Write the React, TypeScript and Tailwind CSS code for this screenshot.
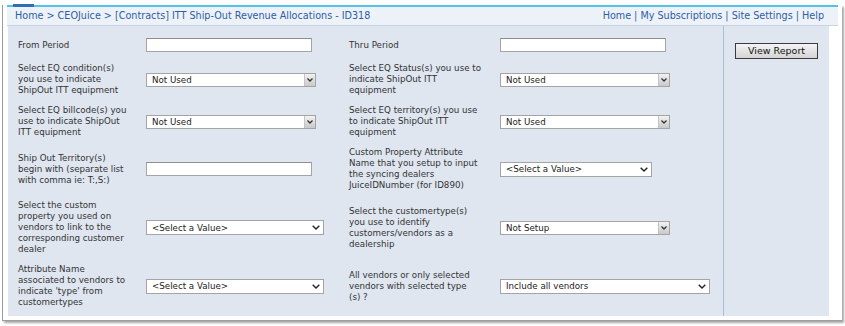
import React from "react";

type Field =
  | { kind: "input"; w: number }
  | { kind: "old"; w: number; value: string }
  | { kind: "new"; w: number; value: string };

type Row = { left: string[]; leftField: Field; right: string[]; rightField: Field };

const rows: Row[] = [
  {
    left: ["From Period"],
    leftField: { kind: "input", w: 166 },
    right: ["Thru Period"],
    rightField: { kind: "input", w: 166 },
  },
  {
    left: ["Select EQ condition(s)", "you use to indicate", "ShipOut ITT equipment"],
    leftField: { kind: "old", w: 170, value: "Not Used" },
    right: ["Select EQ Status(s) you use to", "indicate ShipOut ITT", "equipment"],
    rightField: { kind: "old", w: 170, value: "Not Used" },
  },
  {
    left: ["Select EQ billcode(s) you", "use to indicate ShipOut", "ITT equipment"],
    leftField: { kind: "old", w: 170, value: "Not Used" },
    right: ["Select EQ territory(s) you use", "to indicate ShipOut ITT", "equipment"],
    rightField: { kind: "old", w: 170, value: "Not Used" },
  },
  {
    left: ["Ship Out Territory(s)", "begin with (separate list", "with comma ie: T:,S:)"],
    leftField: { kind: "input", w: 166 },
    right: [
      "Custom Property Attribute",
      "Name that you setup to input",
      "the syncing dealers",
      "JuiceIDNumber (for ID890)",
    ],
    rightField: { kind: "new", w: 152, value: "<Select a Value>" },
  },
  {
    left: [
      "Select the custom",
      "property you used on",
      "vendors to link to the",
      "corresponding customer",
      "dealer",
    ],
    leftField: { kind: "new", w: 178, value: "<Select a Value>" },
    right: [
      "Select the customertype(s)",
      "you use to identify",
      "customers/vendors as a",
      "dealership",
    ],
    rightField: { kind: "old", w: 170, value: "Not Setup" },
  },
  {
    left: ["Attribute Name", "associated to vendors to", "indicate 'type' from", "customertypes"],
    leftField: { kind: "new", w: 178, value: "<Select a Value>" },
    right: ["All vendors or only selected", "vendors with selected type", "(s) ?"],
    rightField: { kind: "new", w: 210, value: "Include all vendors" },
  },
];

function Label({ lines }: { lines: string[] }) {
  return (
    <div className="text-[8.7px] leading-[11px] text-[#333]">
      {lines.map((l) => (
        <div key={l} className="whitespace-nowrap">
          {l}
        </div>
      ))}
    </div>
  );
}

function FieldBox({ field }: { field: Field }) {
  if (field.kind === "input") {
    return (
      <div
        className="h-[14px] border border-[#a4a4a4] border-t-[#8e8e8e] bg-white"
        style={{ width: field.w }}
      />
    );
  }
  if (field.kind === "old") {
    return (
      <div
        className="flex h-[14px] border border-[#a4a4a4] bg-white"
        style={{ width: field.w }}
      >
        <span className="flex-1 pl-[5px] text-[8.7px] leading-[12px] text-[#222]">
          {field.value}
        </span>
        <span className="flex w-[11px] items-center justify-center border-l border-[#c4c4c4] bg-gradient-to-b from-[#f2f2f2] to-[#c9c9c9]">
          <svg width="6" height="4" viewBox="0 0 6 4">
            <path d="M0.5 0.5 L3 3 L5.5 0.5" fill="none" stroke="#333" strokeWidth="1.3" />
          </svg>
        </span>
      </div>
    );
  }
  return (
    <div
      className="flex h-[15px] items-center border border-[#a4a4a4] bg-white"
      style={{ width: field.w }}
    >
      <span className="flex-1 pl-[5px] text-[8.7px] leading-[12px] text-[#222]">
        {field.value}
      </span>
      <svg className="mr-[3px]" width="8" height="5" viewBox="0 0 8 5">
        <path d="M0.7 0.7 L4 4 L7.3 0.7" fill="none" stroke="#222" strokeWidth="1.4" />
      </svg>
    </div>
  );
}

export default function App() {
  return (
    <div className="h-[326px] w-[845px] overflow-hidden bg-white pt-[5px] font-['DejaVu_Sans',sans-serif]">
      <div className="relative ml-[2px] h-[316px] w-[840px] border-b border-l border-[#9c9c9c] bg-white pl-[4px] shadow-[2px_2px_2px_rgba(0,0,0,0.35)]">
        <div className="absolute left-[10px] top-[-1px] h-[3px] w-[21px] bg-[#2f6fb3]" />

        {/* header */}
        <div className="flex h-[21px] w-[831px] items-center justify-between border-t-2 border-b border-t-[#55c2ea] border-b-[#c6d3e5] bg-[#edf2f9] pl-[8px] pr-[14px] text-[9.65px] text-[#2d5da5]">
          <span>Home &gt; CEOJuice &gt; [Contracts] ITT Ship-Out Revenue Allocations - ID318</span>
          <span>Home | My Subscriptions | Site Settings | Help</span>
        </div>

        {/* content */}
        <div className="ml-[1px] flex h-[290px] w-[821px] bg-[#dfe6f0]">
          <div className="w-[716px] border-r border-[#a9bcd8] pl-[10px] pt-[12px]">
            <div className="grid grid-cols-[128px_203px_151px_1fr] items-center gap-y-[9px]">
              {rows.map((r, i) => (
                <React.Fragment key={i}>
                  <div className={i === 0 ? "mb-[2px]" : ""}>
                    <Label lines={r.left} />
                  </div>
                  <div className={i === 0 ? "mb-[2px]" : ""}>
                    <FieldBox field={r.leftField} />
                  </div>
                  <div className={i === 0 ? "mb-[2px]" : ""}>
                    <Label lines={r.right} />
                  </div>
                  <div className={i === 0 ? "mb-[2px]" : ""}>
                    <FieldBox field={r.rightField} />
                  </div>
                </React.Fragment>
              ))}
            </div>
          </div>
          <div className="flex-1 pl-[11px] pt-[11px]">
            <button className="h-[16px] w-[83px] border border-[#3a3a3a] bg-gradient-to-b from-[#f4f4f4] to-[#d4d4d4] text-[9.5px] leading-[14px] text-[#111]">
              View Report
            </button>
          </div>
        </div>
      </div>
    </div>
  );
}
